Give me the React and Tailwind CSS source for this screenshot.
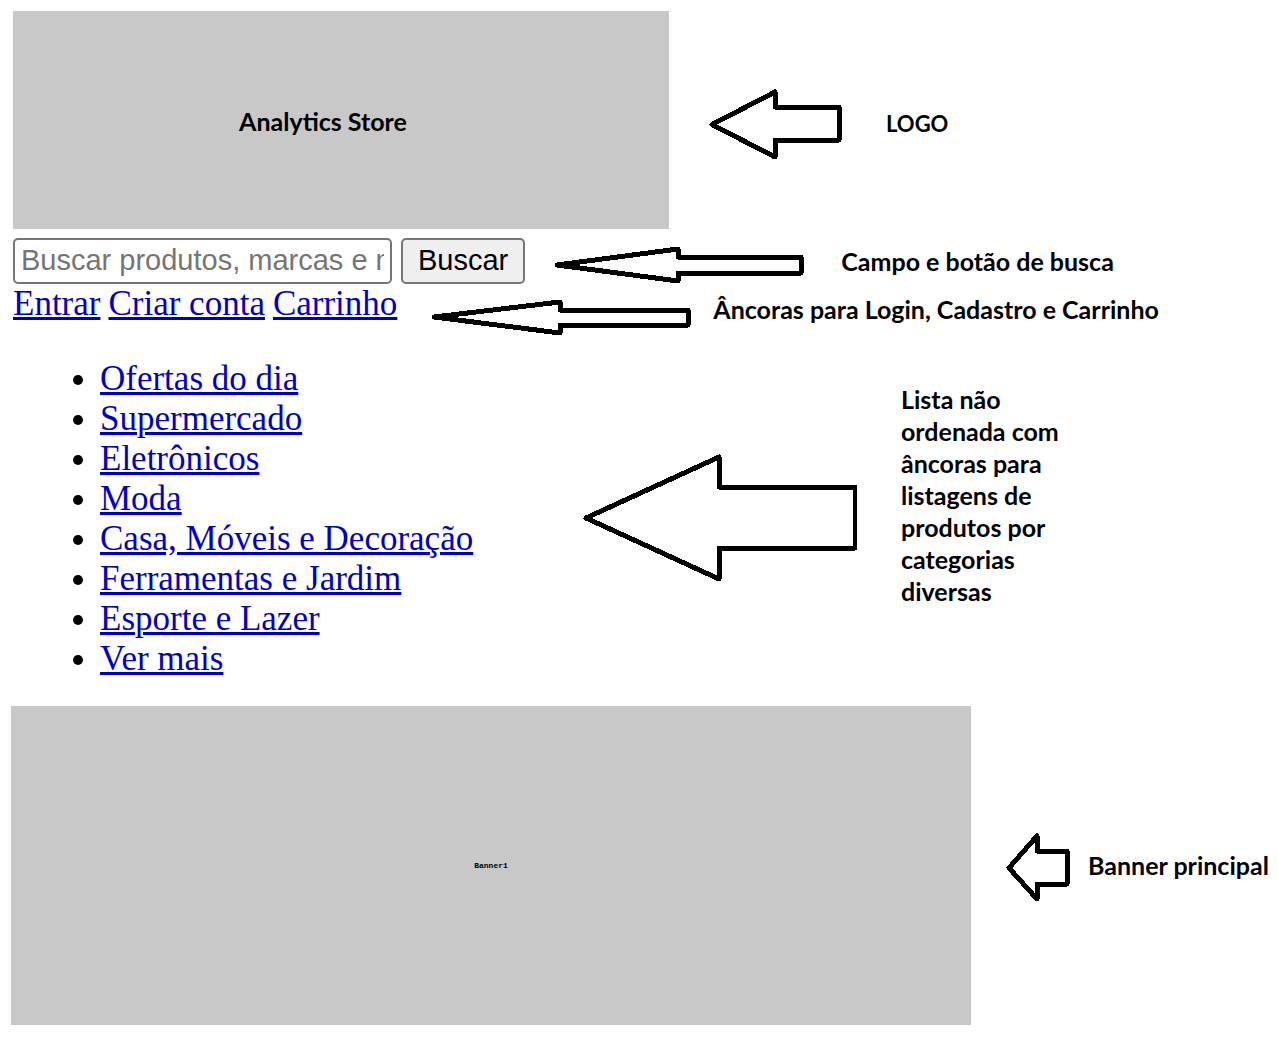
import React from "react";

const categories = [
  "Ofertas do dia",
  "Supermercado",
  "Eletrônicos",
  "Moda",
  "Casa, Móveis e Decoração",
  "Ferramentas e Jardim",
  "Esporte e Lazer",
  "Ver mais",
];

function Arrow({ width, height, points, className }) {
  return (
    <svg
      aria-hidden="true"
      width={width}
      height={height}
      viewBox={`0 0 ${width} ${height}`}
      className={`shrink-0 ${className}`}
    >
      <polygon
        points={points}
        fill="none"
        stroke="#000"
        strokeWidth="5"
        strokeLinejoin="round"
        shapeRendering="crispEdges"
      />
    </svg>
  );
}

function Note({ children, className = "text-[25px]" }) {
  return (
    <p className={`font-['Lato',sans-serif] leading-8 font-bold ${className}`}>{children}</p>
  );
}

function TextLink({ children }) {
  return (
    <a href="#" className="text-[#0000c4] underline decoration-[3px] underline-offset-2">
      {children}
    </a>
  );
}

export default function App() {
  return (
    <div className="bg-white py-[11px] pl-[11px] font-['Liberation_Serif',serif] text-[35px] leading-10 text-black">
      <header className="pl-0.5">
        <div className="flex items-center">
          <div className="flex h-[218px] w-[656px] items-center justify-center bg-[#c8c8c8] pr-9">
            <h1 className="pt-0.5 font-['Lato',sans-serif] text-[25px] leading-8 font-bold">Analytics Store</h1>
          </div>
          <Arrow
            width={133}
            height={71}
            points="3,35.5 66,3 66,18 130,18 130,51 66,51 66,68"
            className="mt-2 ml-10"
          />
          <Note className="mt-2 ml-11 text-[22px]">LOGO</Note>
        </div>

        <div className="mt-[9px] flex items-end">
          <form className="flex gap-[9px] font-['Liberation_Sans',sans-serif] text-[29px] leading-8" onSubmit={(e) => e.preventDefault()}>
            <input
              type="text"
              aria-label="Buscar"
              placeholder="Buscar produtos, marcas e muito mais"
              className="h-[46px] w-[379px] rounded-[5px] border-2 border-[#767676] bg-white px-1.5 pb-0.5 placeholder:text-[#757575]"
            />
            <button type="submit" className="h-[46px] rounded-[5px] border-2 border-[#767676] bg-[#efefef] px-[15px] pb-0.5">
              Buscar
            </button>
          </form>
          <Arrow
            width={252}
            height={38}
            points="4,19 125,3 125,11 248,11 248,27 125,27 125,35"
            className="ml-7"
          />
          <Note className="mb-[7px] ml-9 text-[25px]">Campo e botão de busca</Note>
        </div>

        <div className="flex items-start">
          <nav aria-label="Conta" className="flex gap-2">
            <TextLink>Entrar</TextLink>
            <TextLink>Criar conta</TextLink>
            <TextLink>Carrinho</TextLink>
          </nav>
          <Arrow
            width={261}
            height={37}
            points="4,18 130,3 130,11 258,11 258,26 130,26 130,34"
            className="mt-[15px] ml-[33px]"
          />
          <Note className="mt-[9px] ml-[22px] text-[25px]">Âncoras para Login, Cadastro e Carrinho</Note>
        </div>
      </header>

      <div className="mt-[23px] flex items-center">
        <nav aria-label="Categorias" className="w-[572px]">
          <ul className="list-disc pl-[89px]">
            {categories.map((name) => (
              <li key={name}>
                <TextLink>{name}</TextLink>
              </li>
            ))}
          </ul>
        </nav>
        <Arrow
          width={274}
          height={128}
          points="3,64 136,3 136,33 272,33 272,94 136,94 136,125"
          className="mb-0.5"
        />
        <Note className="mb-12 ml-11 w-[170px] text-[25px]">
          Lista não ordenada com âncoras para listagens de produtos por categorias diversas
        </Note>
      </div>

      <main className="mt-[27px] flex items-center">
        <section className="flex h-[319px] w-[960px] items-center justify-center bg-[#c8c8c8] font-['Liberation_Mono',monospace] text-[8px] leading-4 font-bold">
          Banner1
        </section>
        <Arrow
          width={64}
          height={69}
          points="3,35 31,3 31,18 61,18 61,51 31,51 31,66"
          className="mt-1 ml-[35px]"
        />
        <Note className="mb-0.5 ml-[18px] text-[25px] whitespace-nowrap">Banner principal</Note>
      </main>
    </div>
  );
}
